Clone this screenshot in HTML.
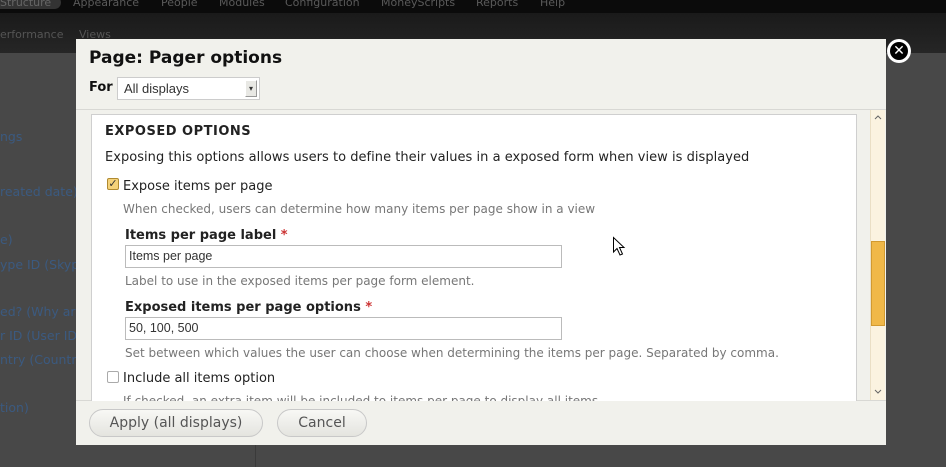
<!DOCTYPE html>
<html><head><style>
*{margin:0;padding:0;box-sizing:border-box}
body{width:946px;height:467px;overflow:hidden;background:#484848;font-family:"DejaVu Sans",sans-serif;position:relative}
.a{position:absolute}
.top{left:0;top:0;width:946px;height:13px;background:#0b0b0b}
.top span{position:absolute;top:-4px;font-size:11px;color:#5a5a5a;font-family:"DejaVu Sans"}
.sub{left:0;top:13px;width:946px;height:40px;background:linear-gradient(#1a1a1a,#262626)}
.lk{font-size:12.5px;color:#3b5a80;position:absolute}
.dlg{left:76px;top:39px;width:810px;height:406px;background:#f1f1ec}
.white{left:91px;top:114px;width:766px;height:287px;background:#fff;border:1px solid #cfcfcf;border-bottom:none;overflow:hidden}
.t{position:absolute;font-size:13px;color:#222;white-space:nowrap}
.g{color:#777;font-size:12px}
.inp{position:absolute;width:437px;height:23px;border:1px solid #bbb;background:#fff;font-family:"Liberation Sans",sans-serif;font-size:12.5px;padding:3px 3px;color:#333}
.btn{position:absolute;top:409px;height:28px;border:1px solid #c8c8c8;border-radius:14px;background:linear-gradient(#f8f8f5,#e4e4df);font-size:14px;color:#555;text-align:center;line-height:26px}
</style></head><body>
<div class="a top">
<span style="left:0;background:#333;border-radius:0 8px 8px 0;padding:0 10px 0 0;color:#666">Structure</span>
<span style="left:73px">Appearance</span><span style="left:161px">People</span><span style="left:219px">Modules</span><span style="left:285px">Configuration</span><span style="left:381px">MoneyScripts</span><span style="left:476px">Reports</span><span style="left:540px">Help</span>
</div>
<div class="a sub"><span style="position:absolute;left:0;top:15px;font-size:11px;color:#555">erformance</span><span style="position:absolute;left:79px;top:15px;font-size:11px;color:#555">Views</span></div>
<div class="lk" style="left:0;top:129px">ngs</div>
<div class="lk" style="left:0;top:184px">reated date)</div>
<div class="lk" style="left:0;top:232px">e)</div>
<div class="lk" style="left:0;top:257px">ype ID (Skype</div>
<div class="lk" style="left:0;top:304px">ed? (Why are</div>
<div class="lk" style="left:0;top:328px">r ID (User ID</div>
<div class="lk" style="left:0;top:352px">ntry (Countr</div>
<div class="lk" style="left:0;top:400px">tion)</div>
<div class="a" style="left:255px;top:444px;width:1px;height:23px;background:#3a3a3a"></div>
<div class="a dlg">
<div class="t" style="left:13px;top:9px;font-size:17px;font-weight:bold;color:#111">Page: Pager options</div>
<div class="t" style="left:13px;top:41px;font-weight:bold;color:#111">For</div>
<div class="a" style="left:41px;top:38px;width:143px;height:23px;background:#fff;border:1px solid #ccc;font-family:'Liberation Sans',sans-serif;font-size:13px;padding:3px 6px;color:#333">All displays
<div class="a" style="right:2px;top:2px;width:12px;height:17px;background:#e8e8e4;border:1px solid #999;border-top-color:#fff;border-left-color:#fff;font-size:8px;line-height:15px;text-align:center">▾</div></div>
<div class="a" style="left:0;top:70px;width:810px;height:1px;background:#d8d8d4"></div>
<div class="a" style="left:0;top:361px;width:810px;height:1px;background:#d8d8d4"></div>
<div class="a" style="left:794px;top:71px;width:15px;height:290px;background:#fbf3e0;border-left:1px solid #eadfc5">
<svg class="a" style="left:3px;top:4px" width="8" height="6"><path d="M1 5L4 2L7 5" stroke="#666" fill="none"/></svg>
<div class="a" style="left:0;top:131px;width:14px;height:85px;background:#f0b848;border:1px solid #d29a30"></div>
<svg class="a" style="left:3px;top:279px" width="8" height="6"><path d="M1 1L4 4L7 1" stroke="#666" fill="none"/></svg>
</div>
</div>
<div class="a white">
<div class="t" style="left:13px;top:9px;font-weight:bold;letter-spacing:.5px">EXPOSED OPTIONS</div>
<div class="t" style="left:13px;top:35px;letter-spacing:.03px">Exposing this options allows users to define their values in a exposed form when view is displayed</div>
<div class="a" style="left:15px;top:63px;width:12px;height:12px;border:1px solid #b08a30;background:#f4d27a;border-radius:2px;font-size:11px;line-height:10px;color:#333;text-align:center">✓</div>
<div class="t" style="left:31px;top:64px">Expose items per page</div>
<div class="t g" style="left:31px;top:87px">When checked, users can determine how many items per page show in a view</div>
<div class="t" style="left:33px;top:113px;font-weight:bold">Items per page label <span style="color:#c33">*</span></div>
<div class="inp" style="left:33px;top:130px">Items per page</div>
<div class="t g" style="left:33px;top:159px">Label to use in the exposed items per page form element.</div>
<div class="t" style="left:33px;top:185px;font-weight:bold">Exposed items per page options <span style="color:#c33">*</span></div>
<div class="inp" style="left:33px;top:202px">50, 100, 500</div>
<div class="t g" style="left:33px;top:231px">Set between which values the user can choose when determining the items per page. Separated by comma.</div>
<div class="a" style="left:15px;top:256px;width:12px;height:12px;border:1px solid #aaa;border-radius:2px"></div>
<div class="t" style="left:31px;top:256px">Include all items option</div>
<div class="t g" style="left:31px;top:279px">If checked, an extra item will be included to items per page to display all items</div>
</div>
<div class="btn" style="left:89px;width:174px">Apply (all displays)</div>
<div class="btn" style="left:277px;width:90px">Cancel</div>
<div class="a" style="left:887px;top:39px;width:24px;height:24px;border-radius:12px;background:#fff"></div>
<div class="a" style="left:890px;top:42px;width:18px;height:18px;border-radius:9px;background:#000;color:#fff;font-size:14px;font-weight:bold;line-height:18px;text-align:center">✕</div>
<svg class="a" style="left:612px;top:236px" width="14" height="22"><path d="M1.5 1.5L1.5 16L5 12.5L8 19L10.5 18L7.5 11.5L12 11.5Z" fill="#fff" stroke="#000" stroke-width="1"/></svg>
</body></html>
